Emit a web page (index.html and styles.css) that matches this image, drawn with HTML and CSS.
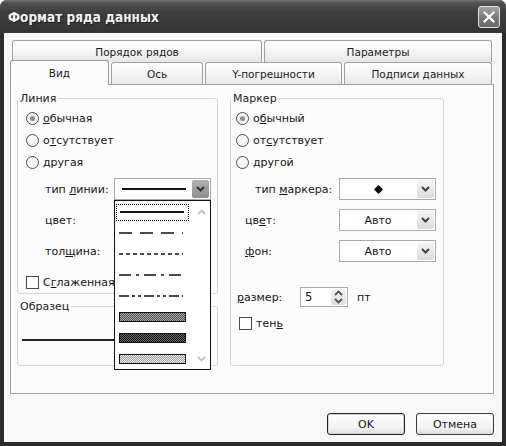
FILE: index.html
```html
<!DOCTYPE html>
<html lang="ru">
<head>
<meta charset="utf-8">
<title>Формат ряда данных</title>
<link rel="stylesheet" href="styles.css">
</head>
<body>
<div class="window">
  <div class="titlebar">
    <span class="title">Формат ряда данных</span>
    <span class="close"><svg width="12" height="12" viewBox="0 0 12 12"><path d="M1.5 1.5 L10.5 10.5 M10.5 1.5 L1.5 10.5" stroke="#fff" stroke-width="2.4" stroke-linecap="round"/></svg></span>
  </div>
  <div class="client">
    <div class="tabrow row1">
      <div class="tab t-order">Порядок рядов</div>
      <div class="tab t-params">Параметры</div>
    </div>
    <div class="tabrow row2">
      <div class="tab sel t-view">Вид</div>
      <div class="tab t-axis">Ось</div>
      <div class="tab t-err">Y-погрешности</div>
      <div class="tab t-labels">Подписи данных</div>
    </div>
    <div class="panel">
      <div class="cols">
        <div class="leftcol">
          <fieldset class="group g-line">
            <legend>Линия</legend>
            <div class="gbody lbody">
              <div class="opt"><span class="radio on"></span><span><u>о</u>бычная</span></div>
              <div class="opt"><span class="radio"></span><span>о<u>т</u>сутствует</span></div>
              <div class="opt"><span class="radio"></span><span>другая</span></div>
              <div class="field f-first">
                <span class="flabel">тип <u>л</u>инии:</span>
                <div class="combo">
                  <div class="val"><span class="solid"></span></div>
                  <div class="btn active"><svg width="9" height="6" viewBox="0 0 9 6"><polyline points="1,1 4.5,4.5 8,1" fill="none" stroke="#333" stroke-width="2"/></svg></div>
                  <div class="droplist">
                    <div class="items">
                      <div class="item"><div class="focus"><span class="solid"></span></div></div>
                      <div class="item"><svg width="64" height="2"><line x1="0" y1="1" x2="64" y2="1" stroke="#111" stroke-width="1.5" stroke-dasharray="13 8"/></svg></div>
                      <div class="item"><svg width="64" height="2"><line x1="0" y1="1" x2="64" y2="1" stroke="#111" stroke-width="1.5" stroke-dasharray="4 3"/></svg></div>
                      <div class="item"><svg width="64" height="2"><line x1="0" y1="1" x2="64" y2="1" stroke="#111" stroke-width="1.5" stroke-dasharray="12 5 3 5"/></svg></div>
                      <div class="item"><svg width="64" height="2"><line x1="0" y1="1" x2="64" y2="1" stroke="#111" stroke-width="1.5" stroke-dasharray="10 3 3 3 3 3"/></svg></div>
                      <div class="item"><svg width="67" height="10"><defs><pattern id="p1" width="2" height="2" patternUnits="userSpaceOnUse"><rect width="2" height="2" fill="#a8a8a8"/><rect width="1" height="1" fill="#555"/><rect x="1" y="1" width="1" height="1" fill="#555"/></pattern></defs><rect x="0.5" y="0.5" width="66" height="9" fill="url(#p1)" stroke="#111"/></svg></div>
                      <div class="item"><svg width="67" height="10"><defs><pattern id="p2" width="2" height="2" patternUnits="userSpaceOnUse"><rect width="2" height="2" fill="#666"/><rect width="1" height="1" fill="#111"/><rect x="1" y="1" width="1" height="1" fill="#111"/></pattern></defs><rect x="0.5" y="0.5" width="66" height="9" fill="url(#p2)" stroke="#111"/></svg></div>
                      <div class="item"><svg width="67" height="10"><defs><pattern id="p3" width="2" height="2" patternUnits="userSpaceOnUse"><rect width="2" height="2" fill="#f0f0f0"/><rect width="1" height="1" fill="#999"/><rect x="1" y="1" width="1" height="1" fill="#999"/></pattern></defs><rect x="0.5" y="0.5" width="66" height="9" fill="url(#p3)" stroke="#111"/></svg></div>
                    </div>
                    <div class="scroll">
                      <svg width="9" height="6" viewBox="0 0 9 6"><polyline points="1,5 4.5,1.5 8,5" fill="none" stroke="#c4c4c4" stroke-width="2"/></svg>
                      <svg width="9" height="6" viewBox="0 0 9 6"><polyline points="1,1 4.5,4.5 8,1" fill="none" stroke="#c4c4c4" stroke-width="2"/></svg>
                    </div>
                  </div>
                </div>
              </div>
              <div class="field">
                <span class="flabel">цвет:</span>
                <div class="combo"><div class="val"></div><div class="btn"><svg width="9" height="6" viewBox="0 0 9 6"><polyline points="1,1 4.5,4.5 8,1" fill="none" stroke="#444" stroke-width="2"/></svg></div></div>
              </div>
              <div class="field">
                <span class="flabel">тол<u>щ</u>ина:</span>
                <div class="combo"><div class="val"></div><div class="btn"><svg width="9" height="6" viewBox="0 0 9 6"><polyline points="1,1 4.5,4.5 8,1" fill="none" stroke="#444" stroke-width="2"/></svg></div></div>
              </div>
              <div class="check-row smooth"><span class="checkbox"></span><span>С<u>г</u>лаженная</span></div>
            </div>
          </fieldset>
          <fieldset class="group g-sample">
            <legend>Образец</legend>
            <div class="sample"><span class="sample-line"></span></div>
          </fieldset>
        </div>
        <fieldset class="group g-marker">
          <legend>Маркер</legend>
          <div class="gbody mbody">
            <div class="opt"><span class="radio on"></span><span>о<u>б</u>ычный</span></div>
            <div class="opt"><span class="radio"></span><span>от<u>с</u>утствует</span></div>
            <div class="opt"><span class="radio"></span><span>другой</span></div>
            <div class="field f-first">
              <span class="flabel ml-type">тип <u>м</u>аркера:</span>
              <div class="combo"><div class="val"><svg width="9" height="9" viewBox="0 0 9 9"><polygon points="4.5,0 9,4.5 4.5,9 0,4.5" fill="#000"/></svg></div><div class="btn"><svg width="9" height="6" viewBox="0 0 9 6"><polyline points="1,1 4.5,4.5 8,1" fill="none" stroke="#444" stroke-width="2"/></svg></div></div>
            </div>
            <div class="field">
              <span class="flabel ml-short">цв<u>е</u>т:</span>
              <div class="combo"><div class="val">Авто</div><div class="btn"><svg width="9" height="6" viewBox="0 0 9 6"><polyline points="1,1 4.5,4.5 8,1" fill="none" stroke="#444" stroke-width="2"/></svg></div></div>
            </div>
            <div class="field">
              <span class="flabel ml-short"><u>ф</u>он:</span>
              <div class="combo"><div class="val">Авто</div><div class="btn"><svg width="9" height="6" viewBox="0 0 9 6"><polyline points="1,1 4.5,4.5 8,1" fill="none" stroke="#444" stroke-width="2"/></svg></div></div>
            </div>
            <div class="size-row">
              <span class="size-label"><u>р</u>азмер:</span>
              <div class="spinner">
                <span class="spin-val">5</span>
                <div class="spin-btns">
                  <svg width="9" height="6" viewBox="0 0 9 6"><polyline points="1,5 4.5,1.5 8,5" fill="none" stroke="#555" stroke-width="1.8"/></svg>
                  <svg width="9" height="6" viewBox="0 0 9 6"><polyline points="1,1 4.5,4.5 8,1" fill="none" stroke="#555" stroke-width="1.8"/></svg>
                </div>
              </div>
              <span class="unit">пт</span>
            </div>
            <div class="check-row shadow"><span class="checkbox"></span><span>тен<u>ь</u></span></div>
          </div>
        </fieldset>
      </div>
    </div>
    <div class="buttons">
      <button class="dlg-btn default">OK</button>
      <button class="dlg-btn">Отмена</button>
    </div>
  </div>
</div>
</body>
</html>
```
FILE: styles.css
```css
* { box-sizing: border-box; }
body {
  margin: 0;
  background: #ffffff;
  font-family: "DejaVu Sans", "Liberation Sans", sans-serif;
  font-size: 11px;
  color: #151515;
}
u { text-decoration: underline; text-underline-offset: 1px; }

.window {
  width: 506px;
  height: 446px;
  background: #2c2c2c;
  border-radius: 7px 7px 0 0;
  display: flex;
  flex-direction: column;
  overflow: hidden;
}
.titlebar {
  height: 33px;
  flex: none;
  display: flex;
  align-items: center;
  justify-content: space-between;
  padding: 0 6px 0 8px;
  background: linear-gradient(#747474 0, #505050 3px, #3e3e3e 12px, #363636 28px, #333 33px);
}
.title {
  color: #f2f2f2;
  font-family: "DejaVu Sans Condensed", "DejaVu Sans", sans-serif;
  font-stretch: condensed;
  font-weight: bold;
  font-size: 13.5px;
  text-shadow: 1px 1px 0 #1e1e1e;
}
.close {
  width: 22px;
  height: 22px;
  border: 1px solid #e4e4e4;
  border-radius: 3px;
  background: linear-gradient(#a2a2a2, #757575 60%, #6a6a6a);
  display: flex;
  align-items: center;
  justify-content: center;
}

.client {
  flex: 1;
  margin: 0 4px 4px 4px;
  background: #f8f8f8;
  padding: 7px 8px 0 6px;
  display: flex;
  flex-direction: column;
}

.tabrow { display: flex; gap: 2px; height: 22px; flex: none; }
.row1 { margin: 0 2px; }
.row2 { margin-right: 2px; }
.tab {
  border: 1px solid #a0a0a0;
  border-bottom: none;
  border-radius: 3px 3px 0 0;
  background: linear-gradient(#ffffff, #f4f4f4 55%, #e6e6e6);
  display: flex;
  align-items: center;
  justify-content: center;
  font-size: 10.5px;
  color: #1a1a1a;
}
.t-order { width: 250px; }
.t-params { flex: 1; }
.t-view { width: 99px; }
.t-axis { width: 92px; }
.t-err { width: 137px; }
.t-labels { flex: 1; }
.tab.sel {
  background: #fcfcfc;
  margin-top: -2px;
  margin-bottom: -1px;
  position: relative;
  z-index: 2;
  border-color: #9a9a9a;
}

.panel {
  height: 310px;
  flex: none;
  border: 1px solid #a0a0a0;
  background: #fcfcfc;
  padding: 7px 0 0 6px;
}
.cols { display: flex; gap: 12px; align-items: stretch; }
.leftcol { width: 201px; display: flex; flex-direction: column; }

.group {
  margin: 0;
  padding: 0;
  border: 1px solid #d6d6d6;
  border-radius: 3px;
  min-width: 0;
}
.group legend {
  padding: 0 2px;
  margin-left: 0;
  line-height: 13px;
  color: #222;
}
.g-marker { width: 214px; }
.g-sample { margin-top: 6px; }

.gbody { padding-top: 2px; }
.lbody { padding: 2px 6px 3px 8px; }
.mbody { padding: 2px 7px 0 5px; }

.opt { height: 22px; display: flex; align-items: center; gap: 4px; }
.radio {
  width: 13px;
  height: 13px;
  border-radius: 50%;
  border: 1px solid #4a4a4a;
  background: radial-gradient(circle at 60% 60%, #f4f4f4, #ffffff);
  display: flex;
  align-items: center;
  justify-content: center;
  flex: none;
}
.radio.on::after {
  content: "";
  width: 5px;
  height: 5px;
  border-radius: 50%;
  background: #8c8c8c;
}

.field { height: 22px; display: flex; align-items: center; margin-top: 9px; }
.field.f-first { margin-top: 5px; }
.lbody .flabel { margin-left: 19px; }
.ml-type { margin-left: 19px; }
.ml-short { margin-left: 9px; }

.combo {
  width: 97px;
  height: 22px;
  margin-left: auto;
  border: 1px solid #ababab;
  background: #fff;
  display: flex;
  position: relative;
}
.combo .val {
  flex: 1;
  display: flex;
  align-items: center;
  justify-content: center;
  color: #151515;
}
.combo .btn {
  width: 17px;
  margin: 1px;
  border-radius: 2px;
  background: linear-gradient(#f6f6f6, #dadada);
  display: flex;
  align-items: center;
  justify-content: center;
}
.combo .btn.active { background: linear-gradient(#b0b0b0, #8e8e8e); }
.solid { display: block; width: 64px; height: 2px; background: #111; }
.combo .val .solid { margin-left: 2px; }

.droplist {
  position: absolute;
  left: -1px;
  top: calc(100% + 1px);
  width: 97px;
  height: 170px;
  border: 1px solid #111;
  background: #fff;
  display: flex;
  z-index: 5;
}
.items { flex: 1; display: flex; flex-direction: column; }
.item { height: 21px; display: flex; align-items: center; padding-left: 4px; }
.item:first-child { padding-left: 0; }
.focus {
  width: 73px;
  height: 17px;
  margin: 1px 0 0 1px;
  border: 1px dotted #000;
  display: flex;
  align-items: center;
  padding-left: 3px;
}
.scroll {
  width: 17px;
  display: flex;
  flex-direction: column;
  justify-content: space-between;
  align-items: center;
  padding: 8px 0 7px;
}

.check-row { height: 16px; display: flex; align-items: center; gap: 4px; }
.smooth { margin-top: 12px; }
.checkbox {
  width: 13px;
  height: 13px;
  border: 1px solid #4a4a4a;
  background: #fff;
  flex: none;
}
.shadow { margin-top: 8px; margin-left: 3px; }

.sample { height: 52px; padding: 26px 0 0 4px; }
.sample-line { display: block; width: 150px; height: 2px; background: #222; }

.size-row { display: flex; align-items: center; height: 20px; margin-top: 25px; }
.size-label { width: 63px; margin-left: 1px; }
.spinner {
  width: 48px;
  height: 20px;
  border: 1px solid #ababab;
  background: #fff;
  display: flex;
}
.spin-val { flex: 1; padding-left: 4px; display: flex; align-items: center; font-size: 11.5px; }
.spin-btns {
  width: 15px;
  margin: 1px;
  background: linear-gradient(#f2f2f2, #dedede);
  border-radius: 2px;
  display: flex;
  flex-direction: column;
  align-items: center;
  justify-content: space-around;
}
.unit { margin-left: 9px; }

.buttons {
  display: flex;
  justify-content: flex-end;
  gap: 11px;
  margin-top: 19px;
}
.dlg-btn {
  width: 78px;
  height: 22px;
  border: 1px solid #3a3a3a;
  border-radius: 3px;
  background: linear-gradient(#ffffff, #f2f2f2 70%, #dcdcdc);
  font-family: "DejaVu Sans", "Liberation Sans", sans-serif;
  font-size: 11px;
  color: #151515;
  padding: 0;
}
.dlg-btn.default { border-color: #222; box-shadow: inset 0 0 0 1px #d4d4d4; }
```
